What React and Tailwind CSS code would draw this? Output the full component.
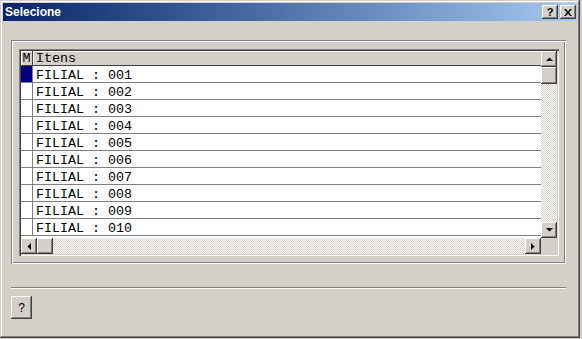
import React from 'react';

const raised =
    'shadow-[inset_-1px_-1px_#404040,inset_1px_1px_#ffffff,inset_-2px_-2px_#808080,inset_2px_2px_#d4d0c8]';
const checker =
    'bg-[repeating-conic-gradient(#d4d0c8_0_25%,#ffffff_0_50%)] bg-[length:2px_2px]';

function Arrow({ dir }) {
    const pts = {
        up: '0,4 7,4 3.5,0.5',
        down: '0,0 7,0 3.5,3.5',
        left: '4,0 4,7 0.5,3.5',
        right: '0,0 0,7 3.5,3.5',
    };
    const vertical = dir === 'up' || dir === 'down';
    return (
        <svg
            width={vertical ? 7 : 4}
            height={vertical ? 4 : 7}
            viewBox={vertical ? '0 0 7 4' : '0 0 4 7'}
        >
            <polygon points={pts[dir]} fill="#000" />
        </svg>
    );
}

function ScrollButton({ dir }) {
    return (
        <div className={`w-[16px] h-[16px] bg-[#d4d0c8] flex items-center justify-center shrink-0 ${raised}`}>
            <Arrow dir={dir} />
        </div>
    );
}

function Row({ label, selected }) {
    return (
        <div className="flex h-[17px] shrink-0">
            <div
                className={`w-[12px] shrink-0 border-r border-b border-[#808080] ${
                    selected ? 'bg-[#000080]' : 'bg-white'
                }`}
            />
            <div className="flex-1 border-b border-[#808080] bg-white pl-[3px] pt-[4px] flex items-center text-[13.33px] leading-none text-black whitespace-pre">
                {label}
            </div>
        </div>
    );
}

export default function App() {
    const rows = ['001', '002', '003', '004', '005', '006', '007', '008', '009', '010'];

    return (
        <div className="w-[582px] h-[339px] bg-[#d4d0c8] overflow-hidden">
            <div className="w-[580px] h-[338px] bg-[#d4d0c8] p-[3px] flex flex-col shadow-[inset_-1px_-1px_#404040,inset_1px_1px_#d4d0c8,inset_-2px_-2px_#808080,inset_2px_2px_#ffffff]">
                {/* title bar */}
                <div className="h-[18px] shrink-0 flex items-center bg-gradient-to-r from-[#0a246a] to-[#a6caf0] pl-[2px] pr-[1px]">
                    <span className="flex-1 text-white font-bold text-[12px] leading-none font-['Liberation_Sans',Arial,sans-serif]">
                        Selecione
                    </span>
                    <div className={`w-[16px] h-[14px] bg-[#d4d0c8] flex items-center justify-center ${raised}`}>
                        <span className="text-[11px] font-bold leading-none text-black font-['Liberation_Sans',Arial,sans-serif] mt-[1px]">
                            ?
                        </span>
                    </div>
                    <div className={`w-[16px] h-[14px] bg-[#d4d0c8] flex items-center justify-center ml-[2px] ${raised}`}>
                        <svg width="8" height="7" viewBox="0 0 8 7">
                            <path d="M0 0h2l2 2.5L6 0h2L5 3.5 8 7H6L4 4.5 2 7H0l3-3.5z" fill="#000" />
                        </svg>
                    </div>
                </div>

                {/* body */}
                <div className="flex-1 flex flex-col pl-[8px] pt-[19px]">
                    {/* group box */}
                    <div className="w-[555px] h-[224px] pl-[8px] pt-[9px] shadow-[inset_1px_1px_#808080,inset_-1px_-1px_#ffffff,inset_2px_2px_#ffffff,inset_-2px_-2px_#808080]">
                        {/* grid */}
                        <div className="w-[540px] h-[207px] p-[2px] bg-[#d4d0c8] shadow-[inset_1px_1px_#808080,inset_2px_2px_#404040,inset_-1px_-1px_#ffffff,inset_-2px_-2px_#d4d0c8] font-['Liberation_Mono','Courier_New',monospace]">
                            <div className="flex h-[187px]">
                                <div className="w-[520px] flex flex-col overflow-hidden bg-white">
                                    <div className="flex h-[15px] shrink-0 bg-[#d4d0c8]">
                                        <div className="w-[12px] shrink-0 pt-[2px] flex items-center justify-center text-[13.33px] leading-none border-r border-b border-[#404040] shadow-[inset_1px_1px_#ffffff]">
                                            M
                                        </div>
                                        <div className="flex-1 pl-[3px] pt-[2px] flex items-center text-[13.33px] leading-none border-b border-[#404040] shadow-[inset_1px_1px_#ffffff]">
                                            Itens
                                        </div>
                                    </div>
                                    {rows.map((n, i) => (
                                        <Row key={n} label={`FILIAL : ${n}`} selected={i === 0} />
                                    ))}
                                </div>
                                <div className="w-[16px] flex flex-col">
                                    <ScrollButton dir="up" />
                                    <div className={`h-[17px] shrink-0 bg-[#d4d0c8] ${raised}`} />
                                    <div className={`flex-1 ${checker}`} />
                                    <ScrollButton dir="down" />
                                </div>
                            </div>
                            <div className="flex h-[16px]">
                                <div className="w-[520px] flex">
                                    <ScrollButton dir="left" />
                                    <div className={`w-[16px] shrink-0 bg-[#d4d0c8] ${raised}`} />
                                    <div className={`flex-1 ${checker}`} />
                                    <ScrollButton dir="right" />
                                </div>
                                <div className="w-[16px] bg-[#d4d0c8]" />
                            </div>
                        </div>
                    </div>

                    {/* separator */}
                    <div className="w-[555px] h-[2px] mt-[23px] border-t border-[#808080] border-b border-b-white" />

                    {/* help button */}
                    <div
                        className={`w-[21px] h-[23px] mt-[7px] bg-[#d4d0c8] flex items-center justify-center text-[12px] leading-none text-black font-['Liberation_Sans',Arial,sans-serif] ${raised}`}
                    >
                        ?
                    </div>
                </div>
            </div>
        </div>
    );
}
